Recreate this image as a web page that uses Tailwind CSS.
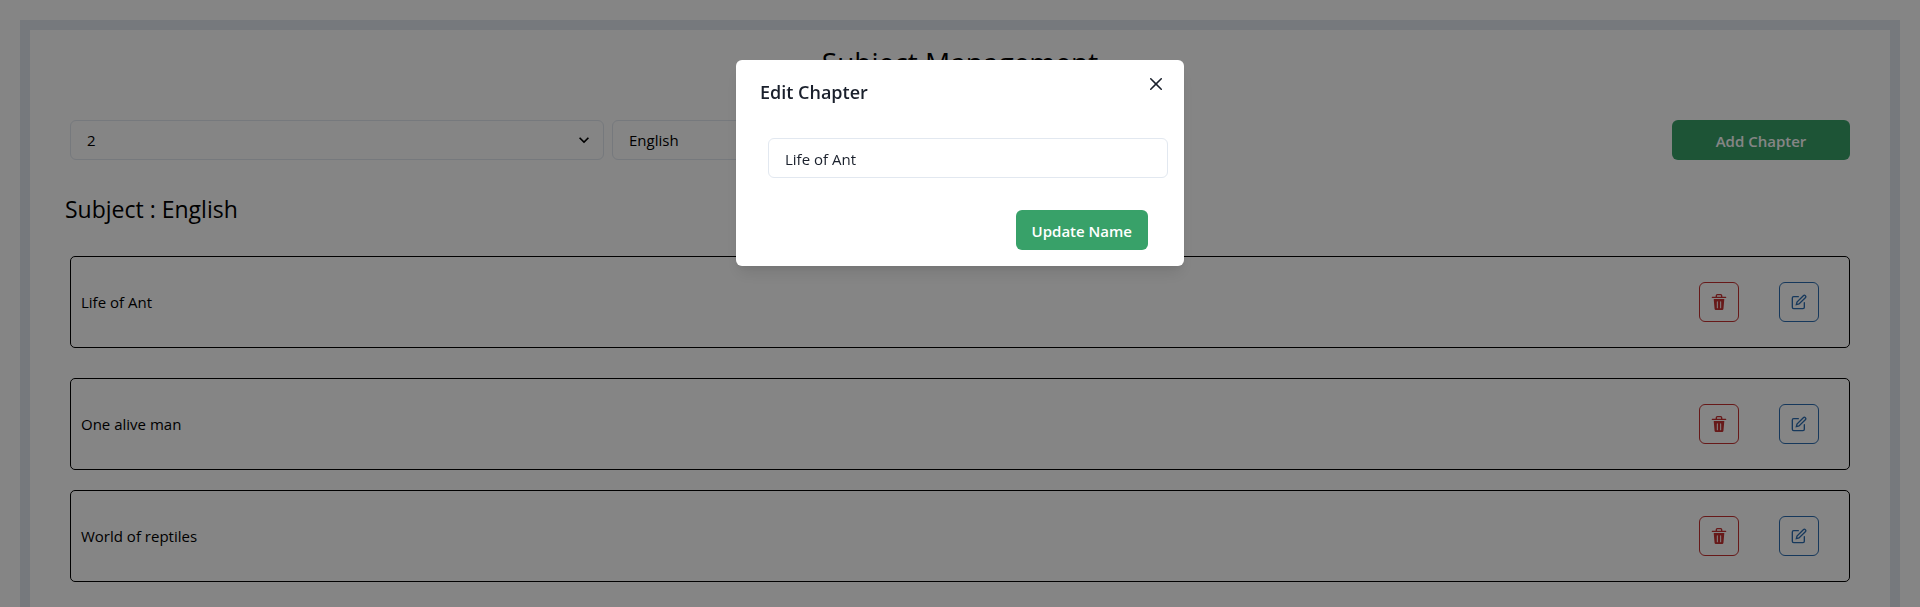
<!DOCTYPE html>
<html lang="en">
<head>
<meta charset="utf-8">
<meta name="viewport" content="width=device-width, initial-scale=1">
<title>Subject Management</title>
<script src="https://cdn.jsdelivr.net/npm/@tailwindcss/browser@4"></script>
</head>
<body class="overflow-hidden bg-white font-['Open_Sans',sans-serif] text-[15px] leading-6 text-black">
<svg class="hidden" aria-hidden="true">
  <symbol id="chevron" viewBox="0 0 24 24"><path fill="currentColor" d="M16.59 8.59L12 13.17 7.41 8.59 6 10l6 6 6-6z"/></symbol>
  <symbol id="trash" viewBox="0 0 24 24"><path fill="currentColor" d="M19.452 7.5H4.547a.5.5 0 00-.5.545l1.287 14.136A2 2 0 007.326 24h9.347a2 2 0 001.992-1.819L19.95 8.045a.5.5 0 00-.129-.382.5.5 0 00-.369-.163zm-9.2 13a.75.75 0 01-1.5 0v-9a.75.75 0 011.5 0zm5 0a.75.75 0 01-1.5 0v-9a.75.75 0 011.5 0zM22 4h-4.75a.25.25 0 01-.25-.25V2.5A2.5 2.5 0 0014.5 0h-5A2.5 2.5 0 007 2.5v1.25a.25.25 0 01-.25.25H2a1 1 0 000 2h20a1 1 0 000-2zM9 3.75V2.5a.5.5 0 01.5-.5h5a.5.5 0 01.5.5v1.25a.25.25 0 01-.25.25h-5.5A.25.25 0 019 3.75z"/></symbol>
  <symbol id="edit" viewBox="0 0 24 24"><g fill="none" stroke="currentColor" stroke-width="2" stroke-linecap="round"><path d="M11 4H4a2 2 0 0 0-2 2v14a2 2 0 0 0 2 2h14a2 2 0 0 0 2-2v-7"/><path d="M18.5 2.5a2.121 2.121 0 0 1 3 3L12 15l-4 1 1-4 9.5-9.5z"/></g></symbol>
  <symbol id="close" viewBox="0 0 24 24"><path fill="currentColor" d="M.439,21.44a1.5,1.5,0,0,0,2.122,2.121L11.823,14.3a.25.25,0,0,1,.354,0l9.262,9.263a1.5,1.5,0,1,0,2.122-2.121L14.3,12.177a.25.25,0,0,1,0-.354l9.263-9.262A1.5,1.5,0,0,0,21.439.44L12.177,9.7a.25.25,0,0,1-.354,0L2.561.44A1.5,1.5,0,0,0,.439,2.561L9.7,11.823a.25.25,0,0,1,0,.354Z"/></symbol>
</svg>

<main class="m-5 border-10 border-[#e2e8f0] px-10 pt-3 pb-20">
  <h1 class="text-center text-[28px] leading-10">Subject Management</h1>

  <div class="mt-[38px] flex items-center gap-2">
    <div class="relative w-[30%]">
      <select aria-label="Class" class="h-10 w-full appearance-none rounded-md border border-[#e2e8f0] bg-white px-4">
        <option>2</option>
      </select>
      <svg class="pointer-events-none absolute top-[10px] right-[10px] size-5"><use href="#chevron"/></svg>
    </div>
    <div class="relative w-[30%]">
      <select aria-label="Subject" class="h-10 w-full appearance-none rounded-md border border-[#e2e8f0] bg-white px-4">
        <option>English</option>
      </select>
      <svg class="pointer-events-none absolute top-[10px] right-[10px] size-5"><use href="#chevron"/></svg>
    </div>
    <button class="ml-auto h-10 w-[10%] rounded-md bg-[#38a169] pt-px font-semibold text-white">Add Chapter</button>
  </div>

  <h2 class="-ml-[5px] mt-[31px] text-[23px] leading-9">Subject : English</h2>

  <ul class="mt-[29px]">
    <li class="mb-[30px] flex items-center rounded-[5px] border border-black py-[25px] pr-[30px] pl-[10px]">
      <span class="grow">Life of Ant</span>
      <div class="flex gap-10">
        <button aria-label="Delete Life of Ant" class="grid size-10 place-items-center rounded-md border border-[#c53030] text-[#c53030]"><svg class="size-4"><use href="#trash"/></svg></button>
        <button aria-label="Edit Life of Ant" class="grid size-10 place-items-center rounded-md border border-[#2b6cb0] text-[#2b6cb0]"><svg class="size-4"><use href="#edit"/></svg></button>
      </div>
    </li>
    <li class="mb-5 flex items-center rounded-[5px] border border-black py-[25px] pr-[30px] pl-[10px]">
      <span class="grow">One alive man</span>
      <div class="flex gap-10">
        <button aria-label="Delete One alive man" class="grid size-10 place-items-center rounded-md border border-[#c53030] text-[#c53030]"><svg class="size-4"><use href="#trash"/></svg></button>
        <button aria-label="Edit One alive man" class="grid size-10 place-items-center rounded-md border border-[#2b6cb0] text-[#2b6cb0]"><svg class="size-4"><use href="#edit"/></svg></button>
      </div>
    </li>
    <li class="flex items-center rounded-[5px] border border-black py-[25px] pr-[30px] pl-[10px]">
      <span class="grow">World of reptiles</span>
      <div class="flex gap-10">
        <button aria-label="Delete World of reptiles" class="grid size-10 place-items-center rounded-md border border-[#c53030] text-[#c53030]"><svg class="size-4"><use href="#trash"/></svg></button>
        <button aria-label="Edit World of reptiles" class="grid size-10 place-items-center rounded-md border border-[#2b6cb0] text-[#2b6cb0]"><svg class="size-4"><use href="#edit"/></svg></button>
      </div>
    </li>
  </ul>
</main>

<div class="fixed inset-0 flex items-start justify-center bg-black/48 pt-[60px]">
  <section role="dialog" aria-modal="true" aria-labelledby="dialog-title" class="relative w-full max-w-md rounded-md bg-white text-[#1a202c] shadow-[0_10px_15px_-3px_rgba(0,0,0,0.1),0_4px_6px_-2px_rgba(0,0,0,0.05)]">
    <h2 id="dialog-title" class="px-6 pt-[17px] pb-[15px] text-[18px] leading-[30px] font-semibold">Edit Chapter</h2>
    <button aria-label="Close" class="absolute top-2 right-3 grid size-8 place-items-center rounded-md"><svg class="size-3"><use href="#close"/></svg></button>
    <div class="pt-4 pr-4 pb-4 pl-8">
      <input type="text" aria-label="Chapter name" value="Life of Ant" class="h-10 w-full rounded-md border border-[#e2e8f0] bg-white px-4 pt-px">
    </div>
    <div class="flex justify-end pt-4 pr-9 pb-4">
      <button class="h-10 rounded-md bg-[#38a169] px-4 pt-px font-semibold text-white">Update Name</button>
    </div>
  </section>
</div>
</body>
</html>
